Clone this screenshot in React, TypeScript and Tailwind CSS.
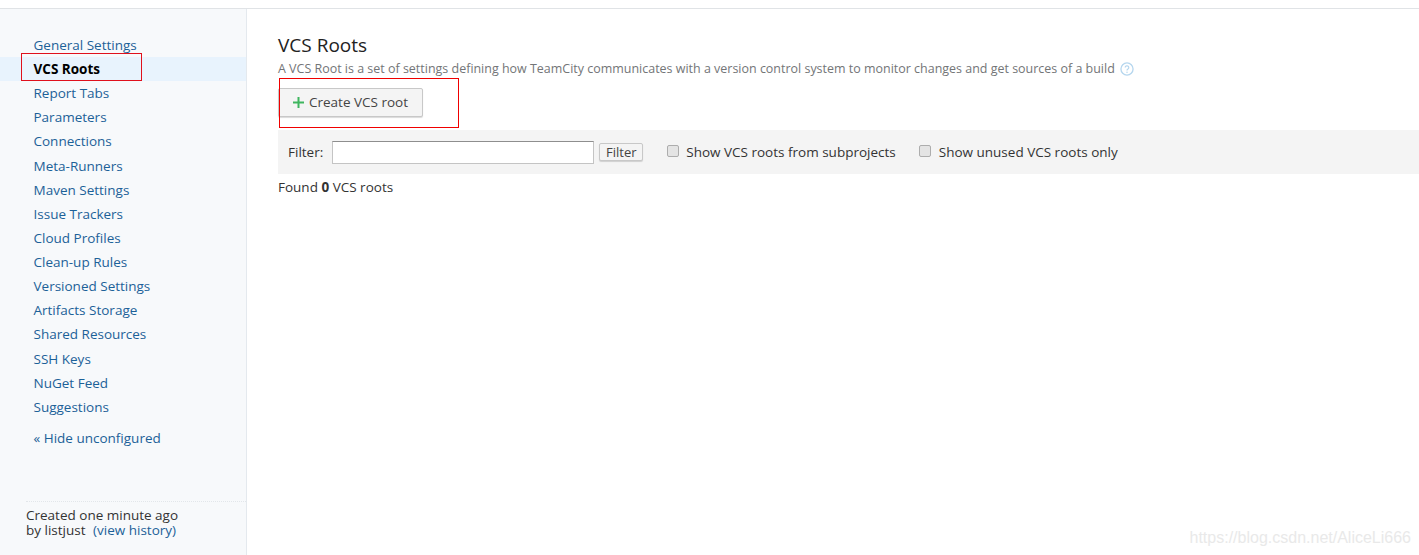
// App.tsx
import React from 'react';

const navItems = [
  'General Settings',
  'VCS Roots',
  'Report Tabs',
  'Parameters',
  'Connections',
  'Meta-Runners',
  'Maven Settings',
  'Issue Trackers',
  'Cloud Profiles',
  'Clean-up Rules',
  'Versioned Settings',
  'Artifacts Storage',
  'Shared Resources',
  'SSH Keys',
  'NuGet Feed',
  'Suggestions',
];

function Sidebar() {
  return (
    <aside className="relative flex h-full w-[247px] shrink-0 flex-col border-r border-[#e4e9ee] bg-[#f7f9fb] pt-[24px]">
      <ul>
        {navItems.map((item) => (
          <li
            key={item}
            className={
              item === 'VCS Roots'
                ? 'relative flex h-[24.13px] items-center bg-[#e8f3fd] pl-[33.5px] font-bold text-black'
                : 'flex h-[24.13px] items-center pl-[33.5px] text-[#1c6198]'
            }
          >
            {item}
            {/* annotation box drawn over the active row */}
            {item === 'VCS Roots' && (
              <span className="absolute left-[21px] top-[-4px] h-[28px] w-[121px] border border-[#e0101c]" />
            )}
          </li>
        ))}
      </ul>
      <a className="mt-[9px] pl-[33.5px] text-[#1c6198]">« Hide unconfigured</a>
      <div className="ml-[26px] mt-auto mb-[17px] border-t border-dotted border-[#e2e6ea] pt-[6px] leading-[15px] text-[#333]">
        <div>Created one minute ago</div>
        <div>
          by listjust <span className="ml-[4px] text-[#1c6198]">(view history)</span>
        </div>
      </div>
    </aside>
  );
}

function Main() {
  return (
    <main className="relative flex-1 pl-[31px] pt-[24px]">
      <h1 className="text-[19px] leading-[24px] text-[#222]">VCS Roots</h1>
      <p className="mt-[1px] flex items-center text-[12.47px] leading-[22px] text-[#737577]">
        A VCS Root is a set of settings defining how TeamCity communicates with a version control system to monitor changes and get sources of a build
        <svg className="ml-[5px]" width="14" height="14" viewBox="0 0 15 15" fill="none">
          <circle cx="7.5" cy="7.5" r="6.5" stroke="#b5d6ee" strokeWidth="1.4" />
          <path d="M5.6 6a1.9 1.9 0 1 1 2.9 1.6c-.7.4-1 .8-1 1.5" stroke="#b5d6ee" strokeWidth="1.3" />
          <circle cx="7.5" cy="11" r=".8" fill="#b5d6ee" />
        </svg>
      </p>
      <div className="relative mt-[8px] h-[42px]">
        <button className="flex h-[29px] w-[145px] items-center rounded-[2px] border border-[#c8c8c8] bg-[#f4f4f4] pl-[14px] text-[#444] shadow-[0_1px_1px_rgba(0,0,0,0.15)]">
          <svg className="mr-[5px]" width="11" height="11" viewBox="0 0 11 11">
            <path d="M5.5 0v11M0 5.5h11" stroke="#3fb65f" strokeWidth="2" />
          </svg>
          Create VCS root
        </button>
        {/* annotation box around the button */}
        <span className="absolute left-[1px] top-[-10px] h-[50px] w-[180px] border border-[#f00000]" />
      </div>
      <div className="flex h-[44px] items-center bg-[#f4f4f4] pl-[10px]">
        <span>Filter:</span>
        <input className="ml-[9px] h-[23px] w-[262px] border border-[#c4c4c4] border-t-[#8e8e8e] bg-white" />
        <button className="ml-[5px] h-[18px] w-[44px] rounded-[2px] border border-[#c8c8c8] bg-[#f4f4f4] text-[13px] leading-none text-[#444] shadow-[0_1px_1px_rgba(0,0,0,0.15)]">
          Filter
        </button>
        <span className="ml-[24px] mt-[-3px] h-[12px] w-[12px] rounded-[2px] border border-[#adadad] bg-[#e4e4e4]" />
        <span className="ml-[7px]">Show VCS roots from subprojects</span>
        <span className="ml-[23px] mt-[-3px] h-[12px] w-[12px] rounded-[2px] border border-[#adadad] bg-[#e4e4e4]" />
        <span className="ml-[8px]">Show unused VCS roots only</span>
      </div>
      <p className="mt-[4px] leading-[18px]">
        Found <b>0</b> VCS roots
      </p>
      {/* blog watermark */}
      <span className="absolute bottom-[5px] right-[8px] font-['Liberation_Sans',sans-serif] text-[16px] text-[#e9e9e9]">
        https://blog.csdn.net/AliceLi666
      </span>
    </main>
  );
}

export default function App() {
  return (
    <div className="h-[555px] w-[1419px] overflow-hidden bg-white pt-[8px] font-['Open_Sans',sans-serif] text-[13.5px] text-[#333]">
      <div className="flex h-[547px] border-t border-[#e0e3e6]">
        <Sidebar />
        <Main />
      </div>
    </div>
  );
}
